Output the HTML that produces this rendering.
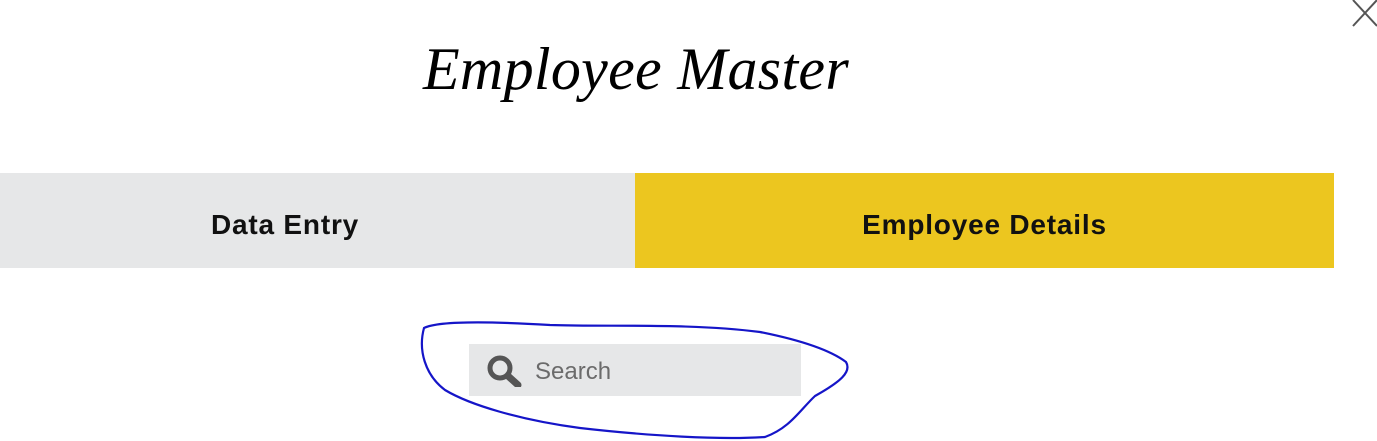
<!DOCTYPE html>
<html><head><meta charset="utf-8"><style>
html,body{margin:0;padding:0;width:1377px;height:441px;background:#fff;overflow:hidden;position:relative;font-family:"Liberation Sans",sans-serif}
.title{position:absolute;left:0;width:1272px;top:31px;text-align:center;font-family:"Liberation Serif",serif;font-style:italic;font-size:60px;line-height:76px;letter-spacing:0.3px;color:#000}
.tab{position:absolute;top:177px;height:95px;display:flex;align-items:center;justify-content:center;font-weight:bold;font-size:28px;color:#111;letter-spacing:0.8px}
.bg1{position:absolute;left:0;top:173px;width:635px;height:95px;background:#e6e7e8}
.bg2{position:absolute;left:635px;top:173px;width:699px;height:95px;background:#ecc61f}
.t1{left:0;width:570px}
.t2{left:635px;width:699px}
.search{position:absolute;left:469px;top:344px;width:332px;height:52px;background:#e6e7e8}
.search span{position:absolute;left:66px;top:14px;font-size:24px;color:#6b6b6b}
</style></head><body>
<svg style="position:absolute;left:1340px;top:0" width="37" height="40"><path d="M13 0 L37 26 M13 26 L37 0" stroke="#555" stroke-width="2" fill="none"/></svg>
<div class="title">Employee Master</div>
<div class="bg1"></div><div class="bg2"></div>
<div class="tab t1">Data Entry</div>
<div class="tab t2">Employee Details</div>
<div class="search">
<svg style="position:absolute;left:18px;top:11px" width="36" height="32"><circle cx="13" cy="13" r="10" stroke="#555" stroke-width="5" fill="none"/><path d="M21 21 L31 30" stroke="#555" stroke-width="7" stroke-linecap="round"/></svg>
<span>Search</span></div>
<svg style="position:absolute;left:0;top:0" width="1377" height="441"><path d="M424 328 C440 320 500 322 550 325 C610 327 690 323 760 332 C800 340 830 350 846 362 C852 372 840 382 815 396 C800 410 790 428 765 437 C720 440 650 436 580 428 C520 420 470 405 445 390 C425 375 418 350 424 328 Z" stroke="#1515c8" stroke-width="2.2" fill="none"/></svg>
</body></html>
